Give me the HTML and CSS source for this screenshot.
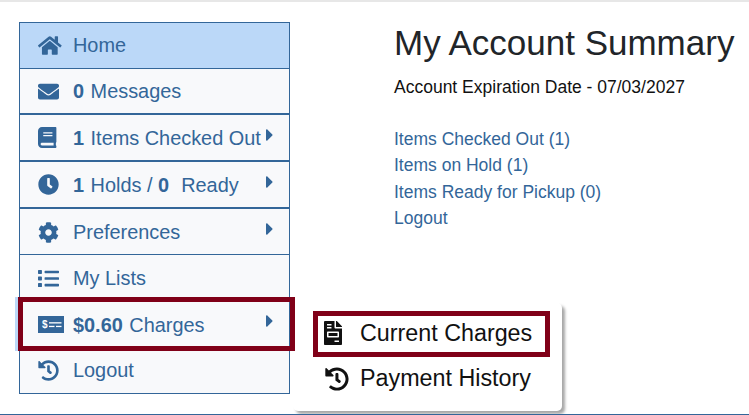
FILE: index.html
```html
<!DOCTYPE html>
<html lang="en">
<head>
<meta charset="utf-8">
<title>My Account Summary</title>
<link rel="stylesheet" href="styles.css">
</head>
<body>
<div class="page">
  <div class="layout">
    <nav class="side">
      <a class="row active">
        <svg class="ico" preserveAspectRatio="xMinYMid meet" viewBox="0 0 576 512"><path d="M280.37 148.26L96 300.11V464a16 16 0 0 0 16 16l112.06-.29a16 16 0 0 0 15.92-16V368a16 16 0 0 1 16-16h64a16 16 0 0 1 16 16v95.64a16 16 0 0 0 16 16.05L464 480a16 16 0 0 0 16-16V300L295.67 148.26a12.19 12.19 0 0 0-15.3 0zM571.6 251.47L488 182.56V44.05a12 12 0 0 0-12-12h-56a12 12 0 0 0-12 12v72.61L318.47 43a48 48 0 0 0-61 0L4.34 251.47a12 12 0 0 0-1.6 16.9l25.5 31A12 12 0 0 0 45.15 301l235.22-193.74a12.19 12.19 0 0 1 15.3 0L530.9 301a12 12 0 0 0 16.9-1.6l25.5-31a12 12 0 0 0-1.7-16.93z"/></svg>
        <span>Home</span>
      </a>
      <a class="row short thick">
        <svg class="ico" preserveAspectRatio="xMinYMid meet" viewBox="0 0 512 512"><path d="M502.3 190.8c3.9-3.1 9.7-.2 9.7 4.7V400c0 26.5-21.5 48-48 48H48c-26.5 0-48-21.5-48-48V195.6c0-5 5.7-7.8 9.7-4.7 22.4 17.4 52.1 39.5 154.1 113.6 21.1 15.4 56.7 47.8 92.2 47.6 35.7.3 72-32.8 92.3-47.6 102-74.1 131.6-96.3 154-113.7zM256 320c23.2.4 56.6-29.2 73.4-41.4 132.7-96.3 142.8-104.7 173.4-128.7 5.8-4.5 9.2-11.5 9.2-18.9v-19c0-26.5-21.5-48-48-48H48C21.5 64 0 85.5 0 112v19c0 7.4 3.4 14.3 9.2 18.9 30.6 23.9 40.7 32.4 173.4 128.7 16.8 12.2 50.2 41.8 73.4 41.4z"/></svg>
        <span><b>0</b> Messages</span>
      </a>
      <a class="row thick nudge lift">
        <svg class="ico" preserveAspectRatio="xMinYMid meet" viewBox="0 0 448 512"><path d="M448 360V24c0-13.3-10.7-24-24-24H96C43 0 0 43 0 96v320c0 53 43 96 96 96h328c13.3 0 24-10.7 24-24v-16c0-7.5-3.5-14.3-8.9-18.7-4.2-15.4-4.2-59.3 0-74.7 5.4-4.3 8.9-11.1 8.9-18.6zM128 134c0-3.3 2.7-6 6-6h212c3.3 0 6 2.7 6 6v20c0 3.3-2.7 6-6 6H134c-3.3 0-6-2.7-6-6v-20zm0 64c0-3.3 2.7-6 6-6h212c3.3 0 6 2.7 6 6v20c0 3.3-2.7 6-6 6H134c-3.3 0-6-2.7-6-6v-20zm253.4 250H96c-17.7 0-32-14.3-32-32 0-17.6 14.4-32 32-32h285.4c-1.9 17.1-1.9 46.9 0 64z"/></svg>
        <span><b>1</b> Items Checked Out</span>
        <svg class="caret" viewBox="0 0 192 512"><path d="M0 384.662V127.338c0-17.818 21.543-26.741 34.142-14.142l128.662 128.662c7.81 7.81 7.81 20.474 0 28.284L34.142 398.804C21.543 411.404 0 402.48 0 384.662z"/></svg>
      </a>
      <a class="row thick nudge lift">
        <svg class="ico" preserveAspectRatio="xMinYMid meet" viewBox="0 0 512 512"><path d="M256,8C119,8,8,119,8,256S119,504,256,504,504,393,504,256,393,8,256,8Zm92.49,313h0l-20,25a16,16,0,0,1-22.49,2.5h0l-67-49.72a40,40,0,0,1-15-31.23V112a16,16,0,0,1,16-16h32a16,16,0,0,1,16,16V256l58,42.5A16,16,0,0,1,348.49,321Z"/></svg>
        <span><b>1</b> Holds / <b>0</b>&nbsp; Ready</span>
        <svg class="caret" viewBox="0 0 192 512"><path d="M0 384.662V127.338c0-17.818 21.543-26.741 34.142-14.142l128.662 128.662c7.81 7.81 7.81 20.474 0 28.284L34.142 398.804C21.543 411.404 0 402.48 0 384.662z"/></svg>
      </a>
      <a class="row nudge">
        <svg class="ico" preserveAspectRatio="xMinYMid meet" viewBox="0 0 512 512"><path d="M487.4 315.7l-42.6-24.6c4.3-23.2 4.3-47 0-70.2l42.6-24.6c4.9-2.8 7.1-8.6 5.5-14-11.1-35.6-30-67.8-54.7-94.6-3.8-4.1-10-5.1-14.8-2.3L380.8 110c-17.9-15.4-38.5-27.3-60.8-35.1V25.8c0-5.6-3.9-10.5-9.4-11.7-36.7-8.2-74.3-7.8-109.2 0-5.5 1.2-9.4 6.1-9.4 11.7V75c-22.2 7.9-42.8 19.8-60.8 35.1L88.7 85.5c-4.9-2.8-11-1.9-14.8 2.3-24.7 26.7-43.6 58.9-54.7 94.6-1.7 5.4.6 11.2 5.5 14L67.3 221c-4.3 23.2-4.3 47 0 70.2l-42.6 24.6c-4.9 2.8-7.1 8.6-5.5 14 11.1 35.6 30 67.8 54.7 94.6 3.8 4.1 10 5.1 14.8 2.3l42.6-24.6c17.9 15.4 38.5 27.3 60.8 35.1v49.2c0 5.6 3.9 10.5 9.4 11.7 36.7 8.2 74.3 7.8 109.2 0 5.5-1.2 9.4-6.1 9.4-11.7v-49.2c22.2-7.9 42.8-19.8 60.8-35.1l42.6 24.6c4.9 2.8 11 1.9 14.8-2.3 24.7-26.7 43.6-58.9 54.7-94.6 1.5-5.5-.7-11.3-5.6-14.1zM256 336c-44.1 0-80-35.9-80-80s35.9-80 80-80 80 35.9 80 80-35.9 80-80 80z"/></svg>
        <span>Preferences</span>
        <svg class="caret" viewBox="0 0 192 512"><path d="M0 384.662V127.338c0-17.818 21.543-26.741 34.142-14.142l128.662 128.662c7.81 7.81 7.81 20.474 0 28.284L34.142 398.804C21.543 411.404 0 402.48 0 384.662z"/></svg>
      </a>
      <a class="row nudge">
        <svg class="ico" preserveAspectRatio="xMinYMid meet" viewBox="0 0 512 512"><path d="M80 368H16a16 16 0 0 0-16 16v64a16 16 0 0 0 16 16h64a16 16 0 0 0 16-16v-64a16 16 0 0 0-16-16zm0-320H16A16 16 0 0 0 0 64v64a16 16 0 0 0 16 16h64a16 16 0 0 0 16-16V64a16 16 0 0 0-16-16zm0 160H16a16 16 0 0 0-16 16v64a16 16 0 0 0 16 16h64a16 16 0 0 0 16-16v-64a16 16 0 0 0-16-16zm416 176H176a16 16 0 0 0-16 16v32a16 16 0 0 0 16 16h320a16 16 0 0 0 16-16v-32a16 16 0 0 0-16-16zm0-320H176a16 16 0 0 0-16 16v32a16 16 0 0 0 16 16h320a16 16 0 0 0 16-16V80a16 16 0 0 0-16-16zm0 160H176a16 16 0 0 0-16 16v32a16 16 0 0 0 16 16h320a16 16 0 0 0 16-16v-32a16 16 0 0 0-16-16z"/></svg>
        <span>My Lists</span>
      </a>
      <a class="row tall charges nudge lift">
        <svg class="ico money" viewBox="0 0 26 17"><rect width="26" height="17"/><text class="dollar" x="4" y="12">$</text><rect class="dash" x="11" y="6.2" width="12.5" height="1.3"/><rect class="dash" x="11" y="9.8" width="5.5" height="1.3"/><rect class="dash" x="18" y="9.8" width="5.5" height="1.3"/></svg>
        <span><b>$0.60</b> Charges</span>
        <svg class="caret" viewBox="0 0 192 512"><path d="M0 384.662V127.338c0-17.818 21.543-26.741 34.142-14.142l128.662 128.662c7.81 7.81 7.81 20.474 0 28.284L34.142 398.804C21.543 411.404 0 402.48 0 384.662z"/></svg>
      </a>
      <a class="row">
        <svg class="ico" preserveAspectRatio="xMinYMid meet" viewBox="0 0 512 512"><path d="M504 255.531c.253 136.64-111.18 248.372-247.82 248.468-59.015.042-113.223-20.53-155.822-54.911-11.077-8.94-11.905-25.541-1.839-35.607l11.267-11.267c8.609-8.609 22.353-9.551 31.891-1.984C173.062 425.135 212.781 440 256 440c101.705 0 184-82.311 184-184 0-101.705-82.311-184-184-184-48.814 0-93.149 18.969-126.068 49.932l50.754 50.754c10.08 10.08 2.941 27.314-11.313 27.314H24c-8.837 0-16-7.163-16-16V38.627c0-14.254 17.234-21.393 27.314-11.314l49.372 49.372C129.209 34.136 189.552 8 256 8c136.81 0 247.747 110.78 248 247.531zm-180.912 78.784l9.823-12.63c8.138-10.463 6.253-25.542-4.21-33.679L288 256.349V152c0-13.255-10.745-24-24-24h-16c-13.255 0-24 10.745-24 24v135.651l65.409 50.874c10.463 8.137 25.541 6.253 33.679-4.21z"/></svg>
        <span>Logout</span>
      </a>
    </nav>
    <main class="main">
      <h1>My Account Summary</h1>
      <p class="expiry">Account Expiration Date - 07/03/2027</p>
      <ul class="links">
        <li><a>Items Checked Out (1)</a></li>
        <li><a>Items on Hold (1)</a></li>
        <li><a>Items Ready for Pickup (0)</a></li>
        <li><a>Logout</a></li>
      </ul>
    </main>
  </div>
  <div class="menu">
    <a class="menu-item current">
      <svg class="menu-ico" preserveAspectRatio="xMinYMid meet" viewBox="0 0 384 512"><path d="M288 256H96v64h192v-64zm89-151L279.1 7c-4.5-4.5-10.6-7-17-7H256v128h128v-6.1c0-6.3-2.5-12.4-7-16.9zm-153 31V0H24C10.7 0 0 10.7 0 24v464c0 13.3 10.7 24 24 24h336c13.3 0 24-10.7 24-24V160H248c-13.2 0-24-10.8-24-24zM64 72c0-4.42 3.58-8 8-8h80c4.42 0 8 3.58 8 8v16c0 4.42-3.58 8-8 8H72c-4.42 0-8-3.58-8-8V72zm0 64c0-4.42 3.58-8 8-8h80c4.42 0 8 3.58 8 8v16c0 4.42-3.58 8-8 8H72c-4.42 0-8-3.58-8-8v-16zm256 304c0 4.42-3.58 8-8 8h-80c-4.42 0-8-3.58-8-8v-16c0-4.42 3.58-8 8-8h80c4.42 0 8 3.58 8 8v16zm0-200v96c0 8.84-7.16 16-16 16H80c-8.84 0-16-7.16-16-16v-96c0-8.84 7.16-16 16-16h224c8.84 0 16 7.16 16 16z"/></svg>
      <span>Current Charges</span>
    </a>
    <a class="menu-item">
      <svg class="menu-ico" preserveAspectRatio="xMinYMid meet" viewBox="-20 0 512 512"><path d="M504 255.531c.253 136.64-111.18 248.372-247.82 248.468-59.015.042-113.223-20.53-155.822-54.911-11.077-8.94-11.905-25.541-1.839-35.607l11.267-11.267c8.609-8.609 22.353-9.551 31.891-1.984C173.062 425.135 212.781 440 256 440c101.705 0 184-82.311 184-184 0-101.705-82.311-184-184-184-48.814 0-93.149 18.969-126.068 49.932l50.754 50.754c10.08 10.08 2.941 27.314-11.313 27.314H24c-8.837 0-16-7.163-16-16V38.627c0-14.254 17.234-21.393 27.314-11.314l49.372 49.372C129.209 34.136 189.552 8 256 8c136.81 0 247.747 110.78 248 247.531zm-180.912 78.784l9.823-12.63c8.138-10.463 6.253-25.542-4.21-33.679L288 256.349V152c0-13.255-10.745-24-24-24h-16c-13.255 0-24 10.745-24 24v135.651l65.409 50.874c10.463 8.137 25.541 6.253 33.679-4.21z"/></svg>
      <span>Payment History</span>
    </a>
  </div>
</div>
</body>
</html>
```
FILE: styles.css
```css
html, body { margin: 0; padding: 0; background: #fff; }
body { font-family: "Liberation Sans", Arial, sans-serif; color: #212529; overflow: hidden; }
a { text-decoration: none; }
.page {
  position: relative;
  width: 749px;
  height: 415px;
  box-sizing: border-box;
  border-top: 2px solid #e7e7e7;
  border-bottom: 1px solid #336699;
  overflow: hidden;
}
.layout { display: flex; padding: 20px 0 0 19px; align-items: flex-start; }
.side {
  width: 271px;
  flex: none;
  box-sizing: border-box;
  border: 1px solid #336699;
  border-bottom-width: 0;
  background: #f8f9fb;
}
.row {
  position: relative;
  display: flex;
  align-items: center;
  height: 46px;
  box-sizing: border-box;
  padding: 0 0 0 18px;
  border-bottom: 1px solid #336699;
  color: #336699;
  font-size: 19.9px;
}
.row.active { background: #bbd8f8; }
.row.thick { border-bottom-width: 2px; height: 47px; }
.row.short.thick { height: 46px; }
.row.tall { height: 47px; }
.row.nudge { padding-top: 2px; }
.row.lift .ico { margin-top: -2px; }
.row b { font-weight: 700; margin-right: 1px; }
.ico { width: 24px; height: 21px; margin-right: 11px; flex: none; fill: #336699; display: block; }
.ico.money { width: 26px; height: 17px; margin-right: 9px; }
.dollar { font-family: "Liberation Sans", sans-serif; font-size: 10px; font-weight: 700; fill: #fff; }
.dash { fill: #fff; }
.caret { position: absolute; left: 246px; top: 10px; width: 7.5px; height: 20px; fill: #336699; }
.charges::before {
  content: "";
  position: absolute;
  left: -5px;
  top: -4px;
  bottom: -4px;
  width: 3px;
  background: #bbd8f8;
}
.charges::after {
  content: "";
  position: absolute;
  z-index: 1;
  left: -2px;
  right: -6px;
  top: -4px;
  bottom: -4px;
  border: 5px solid #800018;
}
.main { margin-left: 104px; }
h1 { margin: 0; font-size: 35px; font-weight: 400; line-height: 41px; color: #212529; white-space: nowrap; }
.expiry { margin: 12px 0 0; font-size: 17.5px; line-height: 24px; color: #111; }
.links { list-style: none; margin: 27px 0 0; padding: 0; font-size: 17.5px; line-height: 26.4px; }
.links a { color: #336699; }
.menu {
  position: absolute;
  left: 293px;
  top: 301px;
  width: 269px;
  height: 108px;
  box-sizing: border-box;
  padding: 8px 0 0 20px;
  background: #fff;
  border-radius: 5px;
  box-shadow: 3px 3px 3px rgba(0,0,0,.35);
}
.menu-item {
  display: flex;
  align-items: center;
  height: 45px;
  padding-left: 11px;
  padding-bottom: 1px;
  color: #111;
  font-size: 23.3px;
  position: relative;
}
.menu-item + .menu-item { margin-top: -1px; }
.current .menu-ico { margin-top: -1px; }
.menu-ico { width: 25px; height: 24px; margin-right: 11px; flex: none; fill: #111; }
.current::after {
  content: "";
  position: absolute;
  left: 0;
  top: 0;
  width: 227px;
  height: 36px;
  border: 5px solid #800018;
}
```
